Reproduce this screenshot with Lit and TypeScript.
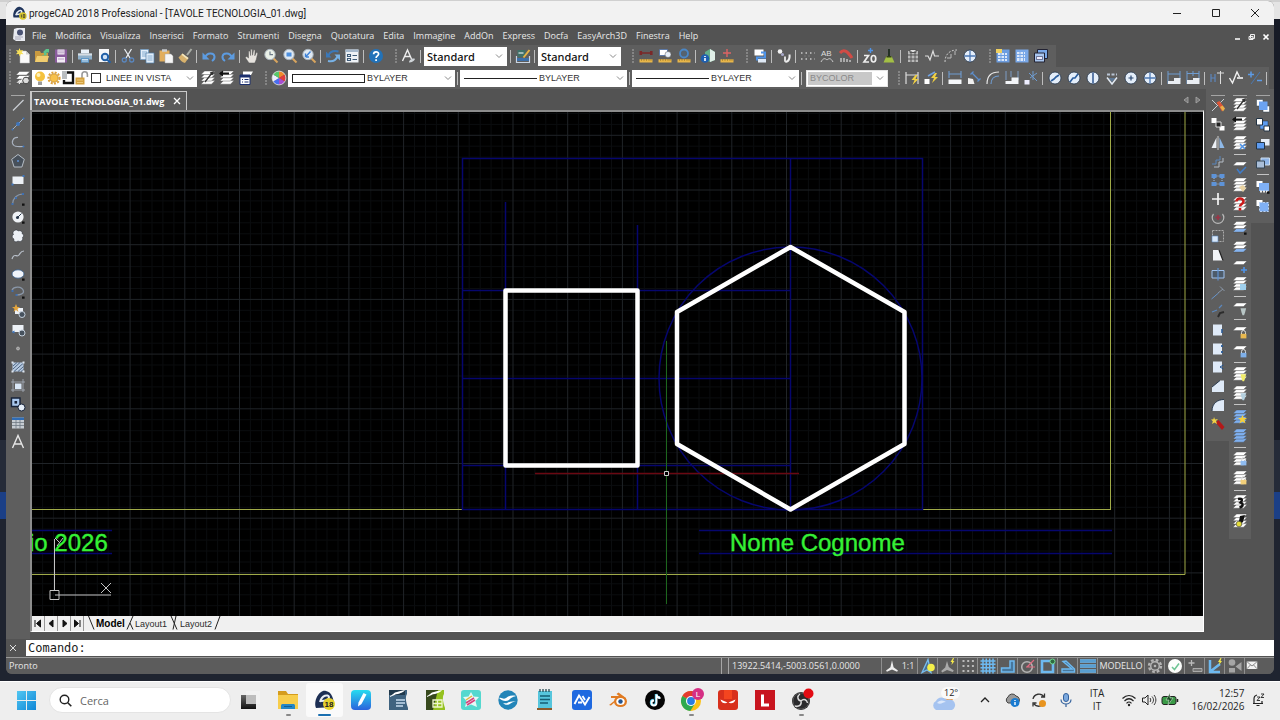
import { LitElement, html, svg, css } from "lit";
import { customElement } from "lit/decorators.js";

type Art = ReturnType<typeof svg>;

const sheet = (y: number, fill: string) =>
  svg`<path d="M4.5 ${y}h10.5l-3.5 3.6H1z" fill=${fill} stroke="#4a4a4a" stroke-width=".4"/>`;
const stack = (extra: Art | string = "", fill = "#fff") =>
  svg`${sheet(10.6, fill)}${sheet(7.4, fill)}${sheet(4.2, fill)}${sheet(1, fill)}${extra}`;
const single = (extra: Art) => svg`${sheet(3, "#fff")}${extra}`;
const bulb = (c: string) => svg`<path d="M8.5 8.2h5.6l-1 4-1 3h-1.6l-1-3z" fill=${c}/>`;
const lock = (c: string) =>
  svg`<path d="M9.5 10V8.5a2 2 0 0 1 4 0V10" fill="none" stroke="#ddd"/><path d="M8.6 9.8h5.8v4.6H8.6z" fill=${c}/>`;
const pad = (inner: Art) => svg`<path d="M3 2.5h9v11H3z" fill="#dfeaf8"/>${inner}`;
const disc = (inner: Art) =>
  svg`<circle cx="8" cy="8" r="6" fill="#e4eefa" stroke="#26374e" stroke-width=".8"/>${inner}`;
const ruler = svg`<path d="M1.5 11.3h13v3.3h-13z" fill="#e8b64a"/><path d="M3.5 11.3v1.4M6 11.3v1.4M8.5 11.3v1.4M11 11.3v1.4M13 11.3v1.4" stroke="#7b5a18" stroke-width=".6"/>`;
const lens = (inner: Art | string, dx = "#dfe9f3") =>
  svg`<path d="M10.5 10.5l4 4" stroke="#d9a55e" stroke-width="2"/><circle cx="7" cy="6.5" r="5.2" fill=${dx} stroke="#aab4bd"/>${inner}`;
const corner = svg`<path d="M12 12.5h2.6v2.2H12z" fill="#111"/>`;

const ART: Record<string, Art> = {
  new: svg`<path d="M5 3h6l3.5 3.5V15H5z" fill="#fafafa" stroke="#bbb" stroke-width=".5"/><path d="M11 3v3.5h3.5" fill="#cfcfcf"/><path d="M4.5 0l1 2.6 2.7-.6-1.5 2.3 1.9 1.9-2.8-.2-1 2.6-1-2.6-2.9.3 1.7-2L1 2l2.6.6z" fill="#f6e05a"/>`,
  open: svg`<path d="M1 3h5l1 2h7v9H1z" fill="#c99a3f"/><path d="M1 14l2-6h12l-2 6z" fill="#f0cd70"/><path d="M8 7h2V4.500H8.500L12 1h3v3.500h-2.500v3H8z" fill="#5cc48c"/>`,
  save: svg`<path d="M2 1.500h12v13H2z" fill="#8a5c9d"/><path d="M4.500 1.500h7v5h-7zM4 9h8v5.500H4z" fill="#f2ecf5"/><path d="M5 3h6M5 4.800h6M5 11h6" stroke="#a98bb8" stroke-width=".8"/>`,
  print: svg`<path d="M4 1.500h8v4H4z" fill="#e9f1f8"/><path d="M1 5.500h14v6H1z" fill="#8fb0ca"/><path d="M4 10h8v4.800H4z" fill="#5f99c9"/><path d="M5 11.500h6M5 13h6" stroke="#fff" stroke-width=".7"/><path d="M1 5.500h14v2H1z" fill="#d7dde2"/>`,
  preview: svg`<path d="M3 1h10v13H3z" fill="#f5f7fa"/><circle cx="9" cy="9" r="3.200" fill="#cfe1f5" stroke="#2261a8" stroke-width="2"/><path d="M11 11.500l3.500 3.300" stroke="#2261a8" stroke-width="2.200"/>`,
  cut: svg`<path d="M4.500 1l5.500 9M11.500 1L6 10" stroke="#e6ebf0" stroke-width="1.300"/><circle cx="4.300" cy="12" r="2" fill="none" stroke="#5a86bd" stroke-width="1.300"/><circle cx="11.700" cy="12" r="2" fill="none" stroke="#5a86bd" stroke-width="1.300"/>`,
  copy: svg`<path d="M1.500 1.500h8v10h-8z" fill="#e2eefa" stroke="#6f9cc5" stroke-width=".7"/><path d="M3 4h5M3 6h5M3 8h5" stroke="#6f9cc5" stroke-width=".8"/><path d="M7 5h8v10H7z" fill="#e2eefa" stroke="#4f7da8" stroke-width=".7"/><path d="M8.500 8h5M8.500 10h5M8.500 12h5" stroke="#6f9cc5" stroke-width=".8"/>`,
  paste: svg`<path d="M1.500 2.500h10v11h-10z" fill="#e2ae5c"/><path d="M4 1.200h5v2.500H4z" fill="#c9ccd0"/><path d="M7 6h6l2 2v7H7z" fill="#f6f6f6" stroke="#a9a9a9" stroke-width=".5"/>`,
  brush: svg`<path d="M14.500 1L10 7" stroke="#a9ada6" stroke-width="2"/><path d="M5.500 5.500l6 4.500L8 15c-3-.500-5-3-6.500-5.500z" fill="#d7b16c"/><path d="M5.500 5.500l6 4.500-1 1.500-6-4.800z" fill="#f1e5bd"/>`,
  undo: svg`<path d="M4 9.500C6 4 13 4.500 13.500 8.500c.2 2-1 3.500-2.500 4.500" fill="none" stroke="#5c9be0" stroke-width="2"/><path d="M1.500 4.500v7h7z" fill="#5c9be0"/>`,
  redo: svg`<path d="M12 9.500C10 4 3 4.500 2.500 8.500c-.2 2 1 3.500 2.500 4.500" fill="none" stroke="#5c9be0" stroke-width="2"/><path d="M14.500 4.500v7h-7z" fill="#5c9be0"/>`,
  hand: svg`<path d="M5 15L1.200 9.500l1.600-1L4.500 10V3l1.500.1.6 4.500V1.200h1.600l.3 6L9.600 1.800l1.500.3-.3 5.700 1.600-3.500 1.400.6-1.500 6.600-1.500 3.500z" fill="#e6e3de" stroke="#555" stroke-width=".5"/>`,
  zclock: lens(svg`<path d="M7 3.500v3.200h3" fill="none" stroke="#6c7a88" stroke-width="1.200"/>`, "#eaf1e8"),
  zwin: lens(svg`<path d="M4.500 4.500h5v4h-5z" fill="#4d90e0"/>`),
  zprev: lens(svg`<path d="M9.500 3.500L4.500 9M4.500 9V5.500M4.500 9H8" stroke="#3e82d8" stroke-width="1.400" fill="none"/>`),
  sync: svg`<path d="M3.500 7.500C5 3.500 9 2.500 13.500 3.500" fill="none" stroke="#3b78b8" stroke-width="2"/><path d="M1 3.500v6h5.500z" fill="#3b78b8"/><path d="M3 13c4.500 1 8-1 9.500-4.500" fill="none" stroke="#78b2e6" stroke-width="2"/><path d="M15 12.500v-6H9.500z" fill="#78b2e6"/>`,
  props: svg`<path d="M1.500 1.500h13v13h-13z" fill="#eef2f6"/><path d="M1.500 1.500h13v2.500h-13z" fill="#a5b8cc"/><path d="M3.500 6.500h3v2h-3zM3.500 10.500h3v2h-3zM8.500 7.500h4.500M8.500 11.500h4.500" stroke="#3d5a77" fill="none" stroke-width="1.100"/>`,
  help: svg`<circle cx="8" cy="8" r="7" fill="#2272b8"/><path d="M5.600 6.300c0-3.300 5-3.200 5-.3 0 2-2.500 1.900-2.500 4M8.100 11.300V13" fill="none" stroke="#fff" stroke-width="1.700"/>`,
  style: svg`<path d="M1.500 13L6.500 2l4 9M3.500 8.500H9" fill="none" stroke="#eee" stroke-width="1.400"/><path d="M8 14.500c0-3 4-5 6-3.500-1 2-3 3.500-6 3.500" fill="#cfd4d8"/>`,
  dimstyle: svg`<path d="M1.500 8v6.500h13V8" stroke="#c9d4e2" stroke-width="1.200" fill="none"/><path d="M2 11.500h12" stroke="#3c6fa8" stroke-width="3"/><path d="M2.500 2h8v7h-8z" fill="#3e7068"/><path d="M3.500 5h5" stroke="#fff"/><path d="M14.500 2L8.500 9.500" stroke="#e6b444" stroke-width="2"/>`,
  dist: svg`<path d="M2.500 5h11" stroke="#7b2828" stroke-width="1.600"/><path d="M1.500 3h2.600v4H1.500zM12 3h2.600v4H12z" fill="#7b2828"/>${ruler}`,
  area: svg`<path d="M2.500 1.500h8v6h-8z" fill="#fff" stroke="#3a62a0" stroke-width=".7"/><circle cx="11" cy="6.500" r="3" fill="#e6eef8" stroke="#555" stroke-width=".5"/>${ruler}`,
  volume: svg`<circle cx="8" cy="5.500" r="4" fill="#55626e" stroke="#4b87c6" stroke-width="1.800"/>${ruler}`,
  info: svg`<path d="M5 4l5-3 5 3v8l-5 2-5-2z" fill="#63ad8a"/><path d="M10 1v13l5-2V4z" fill="#e1efe8"/><circle cx="5" cy="10.500" r="4.300" fill="#1e5faf"/><path d="M5 8v1M5 10v3" stroke="#fff" stroke-width="1.600"/>`,
  point: svg`<path d="M8 1v8M4 5h8" stroke="#dd6464" stroke-width="1.400"/>${ruler}`,
  xref: svg`<path d="M2.500 1.500h9v6h-9z" fill="#fff"/><path d="M9 4.500h4v5H5v3" stroke="#4f93e6" stroke-width="2" fill="none"/><path d="M6 11h8v3.500H6z" fill="#dfe9f5"/>`,
  chain: svg`<circle cx="4" cy="3.500" r="2.300" fill="#f4f4f4"/><circle cx="6.500" cy="6.500" r="1.500" fill="#aac"/><path d="M8 12c3 2 5-1 4.500-5.500h2c.6 5-1.500 9-5.500 8z" fill="#eee"/><path d="M9 8.500v5" stroke="#ddd" stroke-width="2"/>`,
  dots: svg`<path d="M1 5h14M1 11h14" stroke="#c9c9c9" stroke-width="1.400" stroke-dasharray="1.500 3"/><path d="M4 8h8" stroke="#777" stroke-dasharray="2 2"/>`,
  ab: svg`<text x="2" y="8" font-family="Liberation Sans" font-size="8" fill="#ddd">AB</text><path d="M2 14c2-4 4-4 6-2 2-2 4-2 6 2" stroke="#ccc" fill="none"/>`,
  rail: svg`<path d="M2 5c4-5 8-1 12 5" stroke="#d14b45" fill="none" stroke-width="3"/><path d="M3 10v4M6 10v4M9 11v3M12 12v2" stroke="#ddd" stroke-width="1.200"/>`,
  z0: svg`<path d="M2 7.500h4.500L2 14h5M11.500 7.500c3 0 3 6.500 0 6.500s-3-6.500 0-6.500" fill="none" stroke="#eee" stroke-width="1.700"/><path d="M8.500 0v5M6 2.500h5" stroke="#4f93e6" stroke-width="1.400"/>`,
  broom: svg`<path d="M8 1v7" stroke="#1f2d20" stroke-width="1.800"/><path d="M5.500 8h5l3 6.500h-11z" fill="#a3bf45"/><path d="M5.500 8h5v1.500h-5z" fill="#33401c"/>`,
  block: svg`<path d="M3 3h10v11H3z" fill="#b9b9b9"/><path d="M5 1.500h6v3H5zM2 7h12M2 11h12M6 3v11M10 3v11" stroke="#555" fill="#ddd"/>`,
  wave: svg`<path d="M1 8h3l2 4 3-9 1.500 5H15" stroke="#ddd" fill="none" stroke-width="1.200"/>`,
  curve: svg`<path d="M2 14C2 7 6 2 14 2" stroke="#ccc" fill="none" stroke-dasharray="2 1.500"/><path d="M4 10h4M8 6v4M12 3v4" stroke="#bbb"/>`,
  cross: disc(svg`<path d="M8 2.500v11M2.500 8h11" stroke="#4c79b5" stroke-width="1.300"/>`),
  table1: svg`<path d="M1.500 1.500h13v13h-13z" fill="#6d9de0"/><path d="M3 5h9v8H3z" fill="#dce8fa"/><path d="M3 7.500h11M3 10.500h11M6 5v9M9.500 5v9" stroke="#6d9de0"/><path d="M1 1h6v4H1z" fill="#f0d060"/>`,
  table2: svg`<path d="M1.500 1.500h13v13h-13z" fill="#7aa8e8"/><path d="M3 4h8v9H3z" fill="#dce8fa"/><path d="M3 6.500h11M3 9.500h11M6 4v9M9.500 4v9" stroke="#7aa8e8"/>`,
  windows: svg`<path d="M4.500 1.500h10v9h-10z" fill="#7aa8e8" stroke="#223"/><path d="M1.500 5h10v9h-10z" fill="#a9c7f0" stroke="#223"/><path d="M3.500 8.500h6v3h-6z" fill="#eef" stroke="#335" stroke-width=".6"/>`,
  layers: svg`${sheet(9.5, "#ddd")}${sheet(5.5, "#fff")}${sheet(1.5, "#fff")}<circle cx="11" cy="10.500" r="3.300" fill="#ddd" stroke="#444"/><path d="M8 8l-4 6" stroke="#fff"/>`,
  layPrev: stack(svg`<path d="M5 12l7-9M10 3l3-1-1 3" stroke="#333" fill="none" stroke-width="1.300"/>`),
  layBack: stack(svg`<path d="M1 3.500h9" stroke="#111" stroke-width="2.200"/><path d="M4 .5v6l-4-3z" fill="#111"/>`),
  layState: svg`<path d="M5 1.500h10l-2 3.500H5z" fill="#fff"/><path d="M2 5h10v9.500H2z" fill="#fff" stroke="#1b2f6e"/><path d="M2 5h10v2.500H2z" fill="#1b2f6e"/><path d="M4 9.500h1M6.500 9.500h4M4 12h1M6.500 12h4" stroke="#1b2f6e"/>`,
  wheel: svg`<path d="M8 8V1.300A6.700 6.700 0 0 1 13.800 4.600z" fill="#f08a2c"/><path d="M8 8l5.800-3.400a6.700 6.700 0 0 1 0 6.800z" fill="#e33c3c"/><path d="M8 8l5.800 3.400A6.700 6.700 0 0 1 8 14.700z" fill="#a74fd0"/><path d="M8 8v6.700a6.700 6.700 0 0 1-5.800-3.300z" fill="#4a6ef0"/><path d="M8 8l-5.800 3.400a6.700 6.700 0 0 1 0-6.800z" fill="#eef"/><path d="M8 8L2.200 4.600A6.700 6.700 0 0 1 8 1.300z" fill="#58c86a"/><circle cx="8" cy="8" r="6.900" fill="none" stroke="#e8e8e8" stroke-width=".8"/>`,
  bulb: svg`<circle cx="8" cy="6.500" r="5" fill="#f5c23e"/><circle cx="6.500" cy="5" r="2" fill="#fdf0b8"/><path d="M6 11.500h4V15H6z" fill="#9b9b9b"/>`,
  sun: svg`<circle cx="8" cy="8" r="5.600" fill="none" stroke="#e0a23a" stroke-width="2" stroke-dasharray="2 1.300"/><circle cx="8" cy="8" r="4.200" fill="#f7c04a" stroke="#b7822c" stroke-width=".7"/>`,
  frame: svg`<path d="M7 2.500h6v10.500H4V10" fill="#fff" stroke="#111" stroke-width="2.400"/><path d="M2 1h5v8H2z" fill="#b9bdc0"/>`,
  unlock: svg`<path d="M8 8V4.500a2.700 2.700 0 0 1 5.400 0V7" fill="none" stroke="#999" stroke-width="1.600"/><path d="M1.500 7.500h9v7h-9z" fill="#d5a240"/><path d="M3 10h6M3 12.500h6" stroke="#f2d48a" stroke-width=".8"/>`,
  dimFlash: svg`<path d="M2 2v12M14 2v12M2 5h12" stroke="#ddd" stroke-width="1.200"/><path d="M11.500 5l-4 5h3l-2 5 6-6h-3l2-4z" fill="#f0d043"/>`,
  dimFlash2: svg`<path d="M1.500 9h5v5h-5z" fill="#fff"/><path d="M5 6l7-4" stroke="#6fa0e0" stroke-width="1.500"/><path d="M12 3l-4 5h3l-2 5 6-6h-3l2-4z" fill="#f0d043"/>`,
  dimLin: svg`<path d="M2 1v7M14 1v7M2 4h12" stroke="#6f9cd0" stroke-width="1.100"/><path d="M1.500 9.500h13v4.500h-13z" fill="#f5f7fa"/>`,
  dimAl: svg`<path d="M2 8l5 1 1.500 5H2z" fill="#f0f0f0"/><path d="M6 3l7 7M4.500 4.500l3-3M11.500 11.500l3-3" stroke="#5d8fcd" stroke-width="1.300"/>`,
  dimArc: svg`<path d="M2 14C2 6 6 2 14 2" stroke="#e6e6e6" fill="none" stroke-width="1.200"/><path d="M6 14c0-5 3-8 8-8" stroke="#6f9cd0" fill="none" stroke-width="1.200"/>`,
  dimOrd: svg`<path d="M2 1v9M7 1v6M14 1v9" stroke="#7c9cc4"/><path d="M1.500 11h6V7.500h7V14h-13z" fill="#f3f5f8"/>`,
  dimJog: svg`<path d="M1.500 10h5v4.500h-5z" fill="#eef"/><path d="M6 3l8 8M14 3L7 8M10 1v9" stroke="#6f9cd0"/>`,
  rad1: disc(svg`<path d="M4 11l3-2 2-2 3-2" stroke="#2d5f9e" fill="none" stroke-width="1.700"/>`),
  rad2: disc(svg`<path d="M4 12l3-4h2l3-4" stroke="#2d5f9e" fill="none" stroke-width="1.700"/>`),
  rad3: disc(svg`<path d="M8 2.500v11" stroke="#4d6ea0" stroke-width="1.800"/>`),
  angle: svg`<path d="M3 4.500h10" stroke="#b8c4d4" stroke-width="2" stroke-dasharray="3 1.500"/><path d="M4.500 8h7L8 12z" fill="#5d7896"/><path d="M3 7.500l5 6.500 5-6.500" stroke="#e2e9f2" fill="none" stroke-width="1.500"/>`,
  cen: disc(svg`<path d="M8 5.500v5M5.500 8h5" stroke="#25446e" stroke-width="1.200"/>`),
  base: svg`<path d="M2 1v13M14 1v8M2 4h12" stroke="#6f9cd0"/><path d="M2 11h6V8h6.500v6H2z" fill="#e9edf2"/>`,
  base2: svg`<path d="M2 1v13M8 1v5M14 1v8M2 3.500h12" stroke="#6f9cd0"/><path d="M2 10h6V8h6.500v6H2z" fill="#e9edf2"/>`,
  tol: svg`<path d="M2 4v8M6 4v8M2 8h4" stroke="#5d86bd" stroke-width="1.200"/><path d="M8 3h7M11.500 1v13" stroke="#ddd"/>`,
  check: svg`<path d="M1.500 8l3 5L9 2l2.500 5" fill="none" stroke="#f0f0f0" stroke-width="1.400"/><path d="M9 8h6" stroke="#fff" stroke-width="1.500"/>`,
  plusminus: svg`<path d="M4 1.500v6M1 4.500h6M10 10.500h5" stroke="#5d9be6" stroke-width="1.500"/><path d="M13 2L4 14" stroke="#4b79b0"/>`,
  line: svg`<path d="M3 13.500L13.500 3" stroke="#c9cdd2" stroke-width="1.200"/>`,
  xline: svg`<path d="M2 14L14 2" stroke="#9fb0c4"/><circle cx="8" cy="8" r="2" fill="#3f76bd"/><circle cx="2.500" cy="13.500" r="1" fill="#3f76bd"/><circle cx="13.500" cy="2.500" r="1" fill="#3f76bd"/>`,
  pline: svg`<path d="M8 2.500C3 2 1 7 3.500 10c1.500 2 4 2 10 1.500" fill="none" stroke="#a9b2bf" stroke-width="1.200"/><circle cx="13.500" cy="11.500" r="1" fill="#3f76bd"/>`,
  polygon: svg`<path d="M8 1.500l6.300 4.800-2.400 7.700H4.100L1.700 6.300z" fill="#47505a" stroke="#b5bdc6"/><circle cx="8" cy="8" r="1" fill="#5c90d8"/>`,
  rect: svg`<path d="M2.500 4.500h11V12h-11z" fill="#edf1f6"/><path d="M12.500 3h2v2h-2zM1.500 11.500h2v2h-2z" fill="#3f76bd"/>`,
  arc: svg`<path d="M2.500 13C3 7 7 3 13 3" fill="none" stroke="#8593a5" stroke-width="1.200"/><path d="M1.500 12h2v2h-2zM5 6h2v2H5zM12 2h2v2h-2z" fill="#3f6fb0"/>${corner}`,
  circle: svg`<circle cx="8" cy="8" r="5.600" fill="#f0f3f6"/><circle cx="7.500" cy="8.500" r="1.500" fill="#27364a"/><path d="M8 8l3.500-3.500" stroke="#27364a"/>${corner}`,
  cloud: svg`<path d="M4 3c2-2 4-.5 4 0 2-1 5 .5 4 2.500 2 .5 2 3 .5 4 1 3-2 5-4.500 3.500C5.500 15 3 13 4 11 1.500 10 2 7 3.500 6.500 2.500 5 3 3.500 4 3z" fill="#edf1f6" stroke="#33383f" stroke-width=".6"/>`,
  spline: svg`<path d="M2 12c2-7 5-1 7-4s2-4 5-4" fill="none" stroke="#b7bec8" stroke-width="1.200"/>`,
  ellipse: svg`<ellipse cx="8" cy="8" rx="6" ry="4.200" fill="#f0f4fa" stroke="#315988" stroke-width=".8"/>${corner}`,
  earc: svg`<path d="M2 6c2-4 10-4 11.500 1 .5 3-4 4-7 4" fill="none" stroke="#8a97a8" stroke-width="1.200"/><path d="M1.500 6h2v2h-2zM5.500 10h2v2h-2z" fill="#3f6fb0"/>${corner}`,
  insblk: svg`<path d="M5 5h8v6H5z" fill="#edf1f6"/><path d="M6 1l1.300 3H10L7.500 6l1 3L6 7 3.500 9l1-3L2 4h2.700z" fill="#e3a43c"/><circle cx="12" cy="11.500" r="3" fill="#47525e" stroke="#c4cfdb"/>`,
  mkblk: svg`<path d="M2.500 3h11v7h-11z" fill="#edf1f6"/><path d="M1.500 10l3-1.500v3z" fill="#3f76bd"/><circle cx="12" cy="11" r="3" fill="#47525e" stroke="#c4cfdb"/>`,
  dot: svg`<circle cx="8" cy="8.500" r="1.500" fill="#999" stroke="#ccc" stroke-width=".6"/>`,
  hatch: svg`<path d="M2.500 3.500h11v9h-11z" fill="#b8cbe2"/><path d="M3 7l4-3.500M3 10l7-6.500M4 12.500l9-8M8 12.500l5.500-5M11 12.500l2.500-2" stroke="#4e6683"/><path d="M1.500 2.500h2v2h-2zM12.500 2.500h2v2h-2zM1.500 11.500h2v2h-2zM12.500 11.500h2v2h-2z" fill="#dde6f0"/>`,
  region: svg`<path d="M3 1v13M13 1v13M1 4h14M1 12h14" stroke="#a9b3bf" stroke-width=".8"/><path d="M5 5.500h6.500V11H5z" fill="#d9e7f7"/>`,
  group: svg`<path d="M1.500 2H10v8.500H1.500z" fill="#a9c8ee" stroke="#17233a" stroke-width="1.400"/><path d="M4.500 5h2.600v2.600H4.500z" fill="#17233a"/><circle cx="11.500" cy="11.500" r="3.500" fill="#e5edf7" stroke="#17233a"/>`,
  grid: svg`<path d="M2 2.500h12v11H2z" fill="#c6ccd2"/><path d="M2 2.500h12V5H2z" fill="#2f6cb5"/><path d="M2 7.500h12M2 10.500h12M6 5v8.500M10 5v8.500" stroke="#707a84" stroke-width=".8"/>`,
  text: svg`<path d="M2.500 14L8 1.500 13.500 14M4.600 10h6.800" fill="none" stroke="#e6e6e6" stroke-width="1.400"/>`,
  erase: svg`<path d="M2 14L14 2M2 3l5 5" stroke="#c9ced4"/><path d="M6.500 5.500l3-1.500 5 7L12 14.500z" fill="#dd5538"/><path d="M10 10l3 4.500 2-3-2.500-3z" fill="#e8b04a"/>`,
  cpobj: svg`<path d="M1.500 2h5v5h-5zM9.500 10h5v4.500h-5z" fill="#fff"/><path d="M6 6h5v5H6z" fill="#222" stroke="#ddd"/>`,
  mirror: svg`<path d="M6.500 2.500V13h-5z" fill="#edf1f6"/><path d="M9.500 2.500V13h5z" fill="#8fb9e8"/><path d="M8 1v14" stroke="#eee" stroke-width=".8"/>`,
  offset: svg`<path d="M4 13h5V8h4V4" fill="none" stroke="#b5bdc6"/><path d="M2 10h4V6h4V2" fill="none" stroke="#5887be"/>`,
  array: svg`<path d="M1.500 2h5v4h-5zM9.500 2h5v4h-5zM1.500 10h5v4h-5zM9.500 10h5v4h-5z" fill="#5d93d8"/><path d="M6.500 4h3M6.500 12h3M4 6v4M12 6v4" stroke="#9fc2ee" stroke-dasharray="1 1"/>`,
  move: svg`<path d="M8 2v12M2 8h12" stroke="#f4f4f4" stroke-width="1.700"/>`,
  rotate: svg`<path d="M3.500 4A5.800 5.800 0 1 0 12.500 4" fill="none" stroke="#b9b9b9" stroke-width="1.200"/><path d="M8 5v5M5.500 7.500h5" stroke="#9c3346" stroke-width="1.600"/>`,
  scale: svg`<path d="M2.500 2.500h11v11h-11z" fill="none" stroke="#aaa" stroke-dasharray="2 1"/><path d="M2 8h6v6H2z" fill="#d9e8fa" stroke="#5b88be" stroke-width=".6"/>`,
  stretch: svg`<path d="M3 3h6l4 10.500H3z" fill="#f2f4f7"/><path d="M9 3l4 10.500" stroke="#222" stroke-width="1.200"/>`,
  trim: svg`<path d="M2 4.500h12V12H2z" fill="#4d5b6a" stroke="#9fc2ee"/><path d="M8 2v12.500" stroke="#5f92d2" stroke-width="1.200"/>`,
  extend: svg`<path d="M1.500 14l7-6" stroke="#6795cc"/><path d="M8 8l5-4M10 1.500L14.500 6" stroke="#8a97a8"/>`,
  brk: svg`<path d="M8 14l2-4 4-1" stroke="#2c2c2c" stroke-width="2" fill="none"/><path d="M2 9l5-2M9 5l3-3" stroke="#5b88be" stroke-width="1.200"/>`,
  pad1: pad(svg`<path d="M12 7v4" stroke="#2b5b96" stroke-width="1.600"/>`),
  pad2: pad(svg`<path d="M12 4v2M12 10v2" stroke="#2b5b96" stroke-width="1.800"/>`),
  pad3: pad(svg`<path d="M13.500 6L10 8l3.500 2" stroke="#1e4f8c" fill="none"/>`),
  chamfer: svg`<path d="M2 14V9l8-6.500h4V14z" fill="#dfeaf8"/><path d="M2 9l8-6.500" stroke="#2b3b50"/>`,
  fillet: svg`<path d="M2 14C2 6 8 2.500 14 2.500V14z" fill="#dfeaf8"/><path d="M2 14C2 6 8 2.500 14 2.500" fill="none" stroke="#2b3b50"/>`,
  explode: svg`<path d="M5.500 6.500l3-2.500 6 7-2.500 3z" fill="#b31919"/><path d="M4 1l1 2.500L8 3 6 5l1 3-2.500-1.500L2 8l.8-2.800L1 3.500l2.400-.2z" fill="#f0d245"/>`,
  stCheck: single(svg`<path d="M5 10l3 4 6-6" fill="none" stroke="#3f7cc9" stroke-width="1.500"/>`),
  stBrush: stack(svg`<path d="M7 10l4-2 3 3-3 4z" fill="#e8d2a2"/>`),
  stQ: stack(svg`<path d="M4.500 5.500c0-4 7-4 7 0 0 2.500-3.500 2.500-3.500 5M8 12v2.500" fill="none" stroke="#cc1a1a" stroke-width="2.600"/>`),
  stFlake: stack(svg`<path d="M8 9l5 5M13 9l-5 5" stroke="#4f93e6" stroke-width="1.500"/>`),
  st1: svg`${sheet(8.5, "#86b4f0")}${sheet(5, "#fff")}${sheet(1.5, "#fff")}${corner}`,
  st2: svg`${sheet(9.5, "#86b4f0")}${sheet(6, "#fff")}${sheet(2.4, "#fff")}`,
  stPlus: single(svg`<path d="M12 9v6M9 12h6" stroke="#4f93e6" stroke-width="1.600"/>`),
  stIce: stack(svg`<path d="M8 8h6v6H8z" fill="#9fd0ee"/>`),
  stBulbOff: single(bulb("#b8c6c6")),
  stLock: single(lock("#e8b850")),
  stLockB: single(lock("#7fb0ea")),
  stBulb: stack(bulb("#f2ec6a")),
  stBulb2: stack(bulb("#b5d1e0")),
  stStar: stack(svg`<path d="M10.500 6l1.300 3H15l-2.500 2 1 3.500-3-2-3 2 1-3.500L6 9h3.200z" fill="#f5cf3a"/>`, "#7fb0f0"),
  stBlue: stack("", "#7fb0f0"),
  stLk: stack(lock("#f2cf7a")),
  stLkB: stack(lock("#8fbcf2")),
  stMoon: stack(svg`<path d="M6 5c4-1 5 1 2.500 3.500 3 1 3 4-1 5" stroke="#111" fill="none" stroke-width="2.400"/>`),
  stBee: stack(svg`<path d="M8 3l5-1-2 7-5 4z" fill="#111"/><circle cx="7" cy="11" r="2.800" fill="#e3dc3a" stroke="#333" stroke-width=".6"/>`),
  ord1: svg`<path d="M1.500 1.500H8V8H1.500zM8 8h6.500v6H8z" fill="#fff" stroke="#345" stroke-width=".5"/><path d="M4 3.500h8.500V12H4z" fill="#6ba3f2"/>`,
  ord2: svg`<path d="M5 4h8v8H5z" fill="#5b9bf0" stroke="#234" stroke-width=".5"/><path d="M1.500 1.500h6V8h-6zM9 9h5.500v5H9z" fill="#fff" stroke="#234"/>`,
  ord3: svg`<path d="M6 3h8.500v6.500H6z" fill="#e6edf5"/><path d="M1.500 6.500h8V13h-8z" fill="#5d9bf0" stroke="#234"/>`,
  ord4: svg`<path d="M6 3h8.500v7H6z" fill="#8fb5e8" stroke="#cde"/><path d="M1.500 6h8v7h-8z" fill="#a9bed8" stroke="#345"/>`,
  ord5: svg`<path d="M1.500 2h6v6h-6z" fill="#fff"/><path d="M4 4h10v8H4z" fill="#7fb0f5"/><path d="M5 12.500h9" stroke="#eee" stroke-dasharray="2 1" stroke-width="2"/>${corner}`,
  ord6: svg`<path d="M1.500 2h6v6h-6z" fill="#fff"/><path d="M4.500 4.500h9v9h-9z" fill="#7fb0f5" stroke="#b9d2f5" stroke-dasharray="2 1.500"/>`,
  sAnno: svg`<path d="M8 1.500l1.800 8 5 3.500-1 1.500L8 12l-5.800 2.500-1-1.500 5-3.500z" fill="#eee"/>`,
  sAnno2: svg`<path d="M8 1.500L2 14.500l5-2.500 4 2.500z" fill="#4b6f92" stroke="#76bdf0" stroke-width="1.300"/><circle cx="11" cy="9.500" r="3.800" fill="#f4f04a"/>`,
  sAnno3: svg`<path d="M7 3l1.800 6 5 3.500-1 1.500L7 12l-4.800 2.500-1-1.500 4-3.500z" fill="#aaa"/><path d="M13 0l-2.500 4H12l-.5 3 3-4H13l1-3z" fill="#f4e84a"/>`,
  sDots: svg`<path d="M2.500 3H14M2.500 8H14M2.500 13H14" stroke="#bbb" stroke-width="2" stroke-dasharray="2 2.700"/>`,
  sGrid: svg`<path d="M3 .5v15M6.300 .5v15M9.700 .5v15M13 .5v15M.5 3h15M.5 6.300h15M.5 9.700h15M.5 13h15" stroke="#6db9f0" stroke-width="1.500"/>`,
  sOrtho: svg`<path d="M1.500 14H14V3h-4v7H1.500z" fill="#48779c" stroke="#6db9f0" stroke-width="1.500"/>`,
  sPolar: svg`<circle cx="7" cy="9" r="5.300" fill="none" stroke="#b5b5b5" stroke-width="1.600"/><path d="M7 9l7-7M6 9h9" stroke="#e26a80" stroke-width="1.200"/>`,
  sSnap: svg`<path d="M2 3h11v11H2z" fill="none" stroke="#6db9f0" stroke-width="2.600"/><circle cx="12.500" cy="3.500" r="2.500" fill="#2f6b42" stroke="#74d890"/>`,
  sTrack: svg`<path d="M3 3.500l9 7.500H2v3h12.500v-3L6 3z" fill="#48779c" stroke="#6db9f0" stroke-width="1.400"/>`,
  sLwt: svg`<path d="M0 3h16M0 8h16M0 13h16" stroke="#6db9f0" stroke-width="3.400"/><path d="M0 3h16M0 8h16M0 13h16" stroke="#4786b4" stroke-width="1.200"/>`,
  sGear: svg`<circle cx="8" cy="8" r="6" fill="none" stroke="#b5b5b5" stroke-width="2.400" stroke-dasharray="2.700 2"/><circle cx="8" cy="8" r="4.300" fill="none" stroke="#b5b5b5" stroke-width="1.500"/><circle cx="8" cy="8" r="1.300" fill="#b5b5b5"/>`,
  sOk: svg`<circle cx="8" cy="8" r="7" fill="#fbfdfb"/><path d="M5 9l2.500 2.500L12 5.500" fill="none" stroke="#6cc492" stroke-width="1.500"/>`,
  sPm: svg`<path d="M4.500 2v6M1.500 5h6" stroke="#bbb" stroke-width="1.300"/><path d="M6 10.500h9v3H6z" fill="#777" stroke="#bbb" stroke-width=".8"/>`,
  sUcs: svg`<path d="M3 2v12h10M4 13l9-7" fill="none" stroke="#6db9f0" stroke-width="2.500"/><path d="M13.500 0L11 4h1.500l-.5 3 3-4h-1.500l1-3z" fill="#f4e84a"/>`,
  sShapes: svg`<circle cx="5" cy="4.500" r="3.300" fill="#a5a5a5"/><path d="M2 10h6v4.500H2zM14.500 4v9L8.500 8.500z" fill="#a5a5a5"/>`,
  sMail: svg`<path d="M1 2h14v10H1z" fill="#f2f2f2"/><path d="M1.500 2.500L8 8l6.500-5.500M1.500 11.500l4.500-5M14.500 11.500l-4.500-5" stroke="#555" fill="none" stroke-width=".9"/>`,
};

const pic = (name: string, size = 16) =>
  html`<svg class="pic" width=${size} height=${size} viewBox="0 0 16 16" aria-hidden="true">${ART[name]}</svg>`;

/** Toolbar shorthand: "|" is a separator, any other word names an icon button. */
const tools = (list: string) =>
  list.split(" ").map((t) =>
    t === "|" ? html`<i class="sep"></i>` : html`<button class="tool" type="button" aria-label=${t}>${pic(t)}</button>`,
  );

const chevron = html`<svg class="chev" width="8" height="8" viewBox="0 0 8 8" aria-hidden="true"><path d="M1 2.500l3 3 3-3" fill="none" stroke="#8a8a8a"/></svg>`;

const MENUS = "File,Modifica,Visualizza,Inserisci,Formato,Strumenti,Disegna,Quotatura,Edita,Immagine,AddOn,Express,Docfa,EasyArch3D,Finestra,Help".split(",");

@customElement("cad-drawing")
class CadDrawing extends LitElement {
  static styles = css`
    :host { display: block; background: #000; overflow: hidden; }
    svg { display: block; width: 100%; height: 100%; }
    .label { font: 24px "Liberation Sans", Arial, sans-serif; fill: #35f135; stroke: #35f135; stroke-width: 0.4; }
    .guide { fill: none; stroke: #06066e; stroke-width: 1.5; }
    .sheet { fill: none; stroke: #a0aa48; stroke-width: 1; }
    .solid { fill: none; stroke: #fff; stroke-width: 4.5; stroke-linejoin: round; }
    .ucs { fill: none; stroke: #c4c4c4; stroke-width: 1; }
  `;
  render() {
    const step = 54.7 / 5;
    const minor: Art[] = [];
    const major: Art[] = [];
    for (let i = 0; i < 240; i++) {
      const x = 20.7 + i * step;
      const y = 80.6 + i * step;
      const into = i % 5 === 0 ? major : minor;
      into.push(svg`<path d="M${x.toFixed(1)} 0V2000M0 ${y.toFixed(1)}H3000"/>`);
    }
    return html`<svg role="img" aria-label="Disegno">
      <g transform="translate(-32 -112)">
        <g stroke="#0b0d0f">${minor}</g>
        <g stroke="#202428">${major}</g>
        <path class="sheet" d="M1110.500 100V510M32 509.500H462M922 509.500H1110.500M1185 100V574.500H32" />
        <path class="guide" d="M462.500 158.500H922.500V509.500H462.500zM790.500 158V509M505.500 202V509M637.500 225V509M462 290.500H790M462 378.500H790M462 465.500H790M699 530.500H1112M699 553.500H1112M32 530.500H112M32 553.500H112" />
        <circle class="guide" cx="790.500" cy="378.500" r="131.500" />
        <path d="M535 473.500H799" stroke="#6a0812" stroke-width="1.500" />
        <path d="M666.500 341V604" stroke="#1d661d" />
        <path class="solid" d="M505.500 290.500H637.500V465.500H505.500zM790.500 247L904.500 312V444L790.500 509.500 677 444V312z" />
        <path d="M664.500 471.500h4v4h-4z" fill="#000" stroke="#ccc" />
        <text class="label" x="730" y="551">Nome Cognome</text>
        <text class="label" x="29" y="551">io 2026</text>
        <path class="ucs" d="M50 590.500h9v9h-9zM54.500 590V539M55 595H111M101 583l10 10M111 583l-10 10M55 538l5 5M63 538l-6 8" />
      </g>
    </svg>`;
  }
}

@customElement("app-root")
class AppRoot extends LitElement {
  static styles = css`
    :host { display: flex; flex-direction: column; height: 100vh; box-sizing: border-box; overflow: hidden;
      font: 9px "Open Sans", "Noto Sans", sans-serif; color: #e8e8e8;
      background: linear-gradient(#d0d0d0 0 2px, #e4e4e4 2px 19px, #171b26 19px 440px, #252b38 440px 492px, #1b3f86 492px 519px, #1f2430 519px); }
    * { box-sizing: border-box; }
    button { margin: 0; padding: 0; border: 0; background: none; color: inherit; font: inherit; display: flex; align-items: center; justify-content: center; }
    svg { display: block; flex: none; }
    select, input { font: inherit; color: inherit; border: 0; background: none; margin: 0; padding: 0; outline: 0; min-width: 0; appearance: none; }
    .window { flex: 1; min-height: 0; margin: 1px 6px 7px; display: flex; flex-direction: column; background: #535353; border-radius: 6px; overflow: hidden; }
    .title { height: 24px; display: flex; align-items: center; background: #f2f2f2; color: #1c1c1c; padding-left: 6px; font: 10px Roboto, "Open Sans", sans-serif; }
    .title h1 { font: inherit; margin: 0 0 0 2px; flex: 1; white-space: nowrap; }
    .title .win { width: 39px; height: 24px; }
    .menu { height: 20px; display: flex; align-items: center; padding: 0 1px 0 5px; }
    .menu nav { display: flex; gap: 9px; flex: 1; padding-left: 5px; }
    .menu .mdi { width: 14px; height: 16px; align-self: flex-end; }
    .bar { display: flex; align-items: center; width: max-content; height: 22px; background: #5e5e5e; padding-right: 6px; }
    .bar.low { padding-right: 0; }
    .tool { width: 19px; height: 19px; flex: none; }
    .sep { flex: none; width: 5px; height: 13px; background: linear-gradient(#bdbdbd, #bdbdbd) center / 1px 100% no-repeat; }
    .grip { flex: none; width: 7px; height: 14px; background: repeating-linear-gradient(#858585 0 2px, #5e5e5e 2px 3px) center / 2px 100% no-repeat; }
    .gap { margin-left: 7px; }
    .combo { display: flex; align-items: center; background: #fff; color: #333; height: 17px; padding: 0 2px; font: 9px "Liberation Sans", Arial, sans-serif; }
    .combo select { flex: 1; height: 100%; }
    .combo.std { width: 83px; height: 19px; margin: 0 1px; padding: 0 3px; color: #111; font: 500 11px "Noto Sans", sans-serif; }
    .combo.layer { width: 165px; margin-right: 1px; padding-left: 0; }
    .combo.layer .pic { margin-right: -2px; }
    .combo.layer .swatch { width: 10px; height: 10px; border: 1px solid #333; margin: 0 5px 0 3px; flex: none; }
    .combo.by { width: 167px; gap: 2px; }
    .by .swatch { width: 73px; height: 9px; border: 1px solid #222; margin-left: 2px; }
    .by .rule { width: 73px; height: 1px; background: #222; margin-left: 2px; }
    .combo.off { width: 82px; color: #8a8a8a; margin-left: 2px; border: 1px solid #e6e6e6; padding-left: 1px; }
    .combo.off select { background: #c8c8c8; padding-left: 2px; height: 13px; opacity: 1; margin-right: 4px; }
    .chev { margin-right: 1px; pointer-events: none; }
    .body { flex: 1; min-height: 0; display: flex; align-items: stretch; }
    .rail { flex: none; display: flex; flex-direction: column; align-items: center; background: #5e5e5e; align-self: flex-start; padding-top: 6px; }
    .rail::before { content: ""; width: 14px; height: 1px; background: #a5a5a5; flex: none; }
    .rail .tool { flex: 1 1 0; height: auto; min-height: 0; }
    .rail .sep { width: 12px; height: 5px; background: linear-gradient(#c4c4c4, #c4c4c4) center / 100% 1px no-repeat; }
    .rail .stack { display: flex; flex-direction: column; align-items: center; }
    .rail.draw { width: 24px; height: 100%; }
    .draw .stack { height: 355px; }
    .edit { width: 23px; padding-bottom: 8px; margin-left: 2px; }
    .edit .stack { height: 337px; }
    .lay { width: 22px; padding-bottom: 9px; }
    .lay .stack { height: 434px; }
    .order { width: 23px; padding-bottom: 8px; }
    .order .stack { height: 119px; }
    .center { flex: 1; min-width: 0; display: flex; flex-direction: column; padding-bottom: 7px; }
    .files { height: 21px; display: flex; align-items: flex-end; padding-right: 2px; }
    .file { height: 19px; border: 1px solid #c9c9c9; border-width: 1px 1px 0 2px; padding: 0 5px 0 2px; display: flex; align-items: center; gap: 9px; color: #fff; font-weight: 700; background: #5a5a5a; }
    .files .arrows { margin-left: auto; display: flex; gap: 4px; align-self: center; }
    .doc { flex: 1; min-height: 0; display: flex; flex-direction: column; border: 2px solid #8c8c8c; border-right: 1px solid #fff; border-bottom: 1px solid #fff; }
    cad-drawing { flex: 1; min-height: 0; }
    .sheets { height: 15px; display: flex; background: #f0f0f0; color: #2c2c2c; font: 9px "Liberation Sans", Arial, sans-serif; }
    .sheets .go { width: 13px; border-right: 1px solid #999; }
    .sheets .on { font-weight: 700; font-size: 10px; color: #000; }
    .sheets .first { margin-left: 4px; }
    .command { height: 19px; display: flex; align-items: center; border-bottom: 1px solid #9a9a9a; }
    .command button { width: 14px; height: 14px; }
    .command label { margin-left: 6px; flex: 1; height: 16px; background: #fff; color: #1a1a1a; display: flex; align-items: center; gap: 6px; padding: 0 2px; font: 12px/16px "DejaVu Sans Mono", monospace; }
    .command input { flex: 1; }
    .status { height: 16px; display: flex; align-items: stretch; background: #5c5c5c; line-height: 16px; padding-right: 15px; }
    .status .msg { flex: 1; padding-left: 3px; }
    .status .cell { width: 20px; border-left: 1px solid #8f8f8f; }
    .status .cell:last-child { width: 15px; }
    .status .thin { width: 7px; border-left: 1px solid #a5a5a5; }
    .status .pos { width: 153px; border-left: 1px solid #a5a5a5; padding-left: 3px; white-space: nowrap; }
    .status .scale { width: 36px; border-left: 1px solid #8f8f8f; gap: 3px; }
    .status .model { width: 47px; border-left: 1px solid #8f8f8f; }
    .taskbar { flex: none; height: 39px; display: flex; align-items: center; background: #eee; color: #262626; border-top: 1px solid #fff; padding: 0 12px 2px 16px; font-size: 10px; }
    .search { width: 182px; height: 26px; margin-left: 12px; border-radius: 13px; background: #fff; display: flex; align-items: center; gap: 8px; padding-left: 9px; font-size: 11px; color: #666; border: 1px solid #e4e4e4; }
    .search input { flex: 1; }
    .search input::placeholder { color: #666; opacity: 1; }
    .apps { width: 587px; margin-left: 2px; display: flex; height: 100%; align-items: center; }
    .app { flex: 1; height: 34px; position: relative; border-radius: 3px; }
    .app.on { background: #fafafa; }
    .app.run::after, .app.on::after { content: ""; position: absolute; bottom: 1px; width: 5px; height: 2px; border-radius: 1px; background: #888; }
    .app.on::after { width: 13px; background: #1a6fb0; }
    .tray { margin-left: auto; display: flex; align-items: center; height: 100%; }
    .tray button { height: 30px; }
    .weather { width: 34px; margin-right: 8px; }
    .w26 { width: 27px; }
    .w20 { width: 20px; }
    .lang { width: 36px; text-align: center; line-height: 13px; margin-right: 4px; }
    .clock { width: 60px; text-align: right; line-height: 13px; margin-left: 7px; white-space: nowrap; }
    .w22 { width: 22px; }
  `;

  private slash(d: string, w = 8) {
    return html`<svg width=${w} height="14" viewBox="0 0 ${w} 14" aria-hidden="true"><path d=${d} fill="none" stroke="#222" /></svg>`;
  }

  private app(label: string, art: Art, cls = "") {
    return html`<button type="button" class="app ${cls}" aria-label=${label}><svg width="24" height="24" viewBox="0 0 24 24" aria-hidden="true">${art}</svg></button>`;
  }

  private by(label: string, kind: string, value = "BYLAYER") {
    return html`<div class="combo by"><i class=${kind}></i><select aria-label=${label}><option>${value}</option></select>${chevron}</div>`;
  }

  private titleBar() {
    return html`<header class="title">
      <svg width="15" height="16" viewBox="0 0 20 20" aria-hidden="true"><path d="M2 16C0 9 6 0 11 2c5 1 7 7 7 14z" fill="#20355c"/><path d="M5 13c2-6 7-8 8-5 0 3-3 4-7 4" fill="none" stroke="#e8eef6" stroke-width="2"/><circle cx="14.500" cy="14" r="5" fill="#d9c82e"/><path d="M12.500 12v4M15 12h2v4h-2z" stroke="#333" fill="none"/></svg>
      <h1>progeCAD 2018 Professional - [TAVOLE TECNOLOGIA_01.dwg]</h1>
      <button class="win" type="button" aria-label="Riduci"><svg width="10" height="10"><path d="M1 5.500h8" stroke="#222"/></svg></button>
      <button class="win" type="button" aria-label="Ingrandisci"><svg width="10" height="10"><path d="M1.500 1.500h7v7h-7z" fill="none" stroke="#222"/></svg></button>
      <button class="win" type="button" aria-label="Chiudi"><svg width="10" height="10"><path d="M1 1l8 8M9 1L1 9" stroke="#222"/></svg></button>
    </header>`;
  }

  private menuBar() {
    return html`<div class="menu">
      <svg width="16" height="16" viewBox="0 0 16 16" aria-hidden="true"><path d="M3 2l3-1h8v13H5l-3-2z" fill="#e8eaf0"/><circle cx="9" cy="5.500" r="3" fill="#4a5374"/><path d="M4 10h8M4 12h6" stroke="#aab"/></svg>
      <nav>${MENUS.map((m) => html`<button type="button">${m}</button>`)}</nav>
      <button class="mdi" type="button" aria-label="Riduci disegno"><svg width="8" height="8"><path d="M1 6h5" stroke="#fff" stroke-width="1.500"/></svg></button>
      <button class="mdi" type="button" aria-label="Ripristina disegno"><svg width="8" height="8"><path d="M2.500 1.500h4v4h-4zM1 3.500h4v3H1z" fill="#666" stroke="#eee"/></svg></button>
      <button class="mdi" type="button" aria-label="Chiudi disegno"><svg width="8" height="8"><path d="M1.500 1.500l5 5M6.500 1.500l-5 5" stroke="#fff" stroke-width="1.700"/></svg></button>
    </div>`;
  }

  private toolbars() {
    return html`
      <div class="bar top" role="toolbar">
        <i class="grip"></i>${tools("new open save | print preview | cut copy paste brush | undo redo | hand zclock zwin zprev | sync props | help")}
        <i class="grip gap"></i>${tools("style |")}
        <div class="combo std"><select aria-label="Stile testo"><option>Standard</option></select>${chevron}</div>
        ${tools("| dimstyle |")}
        <div class="combo std"><select aria-label="Stile quota"><option>Standard</option></select>${chevron}</div>
        <i class="grip gap"></i>${tools("dist area volume | info point")}
        <i class="grip gap"></i>${tools("xref | chain | dots ab rail | z0 broom | block wave curve cross")}
        <i class="grip gap"></i>${tools("table1 table2 windows")}
      </div>
      <div class="bar low" role="toolbar">
        <i class="grip"></i>${tools("layers")}
        <div class="combo layer">${pic("bulb")}${pic("sun")}${pic("frame")}${pic("unlock")}<i class="swatch"></i><select aria-label="Layer"><option>LINEE IN VISTA</option></select>${chevron}</div>
        ${tools("layPrev layBack layState")}
        <i class="grip gap"></i>${tools("wheel")}
        ${this.by("Colore", "swatch")}<i class="sep"></i>${this.by("Tipo di linea", "rule")}<i class="sep"></i>${this.by("Spessore", "rule")}<i class="sep"></i>
        <div class="combo off"><select aria-label="Stile di stampa" disabled><option>BYCOLOR</option></select>${chevron}</div>
        <i class="grip gap"></i>${tools("dimFlash dimFlash2 | dimLin dimAl dimArc dimOrd dimJog | rad1 rad2 rad3 angle cen cross | base base2 | tol check plusminus |")}
      </div>`;
  }

  private center() {
    return html`<main class="center">
      <div class="files">
        <div class="file"><span>TAVOLE TECNOLOGIA_01.dwg</span><button type="button" aria-label="Chiudi scheda"><svg width="8" height="8"><path d="M1 1l6 6M7 1L1 7" stroke="#fff" stroke-width="1.300"/></svg></button></div>
        <div class="arrows">
          <button type="button" aria-label="Precedente"><svg width="8" height="8"><path d="M6 1v6L2 4z" fill="#777" stroke="#aaa" stroke-width=".8"/></svg></button>
          <button type="button" aria-label="Successiva"><svg width="8" height="8"><path d="M2 1v6l4-3z" fill="#777" stroke="#aaa" stroke-width=".8"/></svg></button>
        </div>
      </div>
      <div class="doc">
        <cad-drawing></cad-drawing>
        <div class="sheets">
          ${["M3 2v7M8.500 2L4.500 5.500l4 3.500z", "M8 2L4 5.500 8 9z", "M5 2l4 3.500L5 9z", "M9 2v7M3.500 2l4 3.500-4 3.500z"].map(
            (d, i) => html`<button class="go" type="button" aria-label="Scorri ${i + 1}"><svg width="12" height="11"><path d=${d} fill="#111" stroke="#111"/></svg></button>`)}
          <span class="first">${this.slash("M0.500 0L6 13.500")}</span>
          <button class="on" type="button">Model</button>${this.slash("M8 0L2 13.500M5 7l3 6.500", 10)}
          <button type="button">Layout1</button>${this.slash("M4 0l6 13.500M9 0L6 13.500", 13)}
          <button type="button">Layout2</button>${this.slash("M8 0L3 13.500", 10)}
        </div>
      </div>
    </main>`;
  }

  private status() {
    const cells = (s: string) => s.split(" ").map((n) => html`<button class="cell" type="button" aria-label=${n}>${pic(n)}</button>`);
    return html`<footer class="status">
      <span class="msg">Pronto</span><i class="thin"></i><span class="pos">13922.5414,-5003.0561,0.0000</span>
      <button class="scale" type="button">${pic("sAnno", 14)}<span>1:1</span></button>
      ${cells("sAnno2 sAnno3 sDots sGrid sOrtho sPolar sSnap sTrack sLwt")}
      <button class="model" type="button">MODELLO</button>
      ${cells("sGear sOk sPm sUcs sShapes")}<button class="cell" type="button" aria-label="Messaggi">${pic("sMail", 12)}</button>
    </footer>`;
  }

  private taskbar() {
    return html`<div class="taskbar">
      <button type="button" aria-label="Start"><svg width="21" height="21" viewBox="0 0 21 21"><defs><linearGradient id="w" x2="1" y2="1"><stop stop-color="#52c7f2"/><stop offset="1" stop-color="#0f86d6"/></linearGradient></defs><path d="M1 1h9v9H1zM11 1h9v9h-9zM1 11h9v9H1zM11 11h9v9h-9z" fill="url(#w)"/></svg></button>
      <label class="search"><svg width="13" height="13" viewBox="0 0 13 13" aria-hidden="true"><circle cx="5.500" cy="5.500" r="4.300" fill="none" stroke="#222" stroke-width="1.400"/><path d="M8.800 8.800l3.500 3.500" stroke="#222" stroke-width="1.600"/></svg><input type="text" placeholder="Cerca" aria-label="Cerca" /></label>
      <div class="apps">
        ${this.app("Visualizzazione attività", svg`<defs><linearGradient id="t" x2="0" y2="1"><stop stop-color="#666"/><stop offset="1" stop-color="#111"/></linearGradient></defs><path d="M2 7h15v14H2z" fill="url(#t)"/><path d="M7 3h14v13H7z" fill="#f4f4f4" opacity=".7"/><path d="M7 7h10v9H7z" fill="#bdbdbd"/>`)}
        ${this.app("Esplora file", svg`<path d="M2 3h8l2 3h10v4H2z" fill="#d59c1c"/><path d="M2 7h20v14H2z" fill="#f7cd4b"/><path d="M5 21v-3.500c0-1 1-1.500 1.500-1.500h11c.5 0 1.500.5 1.500 1.500V21z" fill="#2487c7"/><path d="M8 18.500h8" stroke="#125d92"/>`, "run")}
        ${this.app("progeCAD", svg`<path d="M3 20C0 12 7 1 13 3c6 1 8 8 8 16z" fill="#1d2f54"/><path d="M7 14c2-7 8-8 9-5 0 3-4 4-8 4" fill="none" stroke="#e9eef6" stroke-width="2"/><circle cx="16" cy="16" r="6" fill="#e6d22f"/><text x="11.500" y="19" font-family="Liberation Sans" font-weight="700" font-size="8" fill="#222">18</text>`, "on")}
        ${this.app("Note", svg`<defs><linearGradient id="n" x2="0" y2="1"><stop stop-color="#27dcf0"/><stop offset="1" stop-color="#2a62dc"/></linearGradient></defs><rect x="2" y="2" width="20" height="20" rx="4" fill="url(#n)"/><path d="M9 18.500l.500-4 5-9.500 3 1.500-5 9.500z" fill="#fff"/>`)}
        ${this.app("Writer", svg`<path d="M3 2h18v4c-2 3-1 8 1 14v2H3z" fill="#3f6380"/><path d="M3 2h16v5H3z" fill="#20394c"/><path d="M4 8c3-1 4-4 7-4 2-1 5-1 8-2-2 3-5 3-7 4-3 0-5 2-8 3z" fill="#fff"/><path d="M10 12h9M10 15h9M10 18h7" stroke="#c7ddef" stroke-width="1.300"/>`)}
        ${this.app("Calc", svg`<path d="M3 2h18v4c-2 3-1 8 1 14v2H3z" fill="#95c11f"/><path d="M3 2h12L10 22H3z" fill="#37491d"/><path d="M4 8c3-1 4-4 7-4 2-1 5-1 8-2-2 3-5 3-7 4-3 0-5 2-8 3z" fill="#fff"/><path d="M10 12h9v7h-9zM10 15.500h9M14.500 12v7" fill="none" stroke="#eef7cc" stroke-width="1.300"/>`)}
        ${this.app("Stelle", svg`<rect x="2" y="2" width="20" height="20" rx="3" fill="#55d8cf"/><path d="M12 4l2.500 4.500 5.500.5-3.500 4 1.500 6-6-2.500L6 19l1.500-6L4 9l5.500-.5z" fill="#e6f8f6"/><path d="M7 15l8-5M8 17l8-5" stroke="#d8417d" stroke-width="1.500"/><path d="M7 12l6-4" stroke="#e6b43a" stroke-width="1.500"/>`)}
        ${this.app("OpenOffice", svg`<circle cx="12" cy="12" r="9.700" fill="#2385b8"/><path d="M3 10c3-1 4 2 7 0 2-2 6-3 10-2-4 1-5 2-7 4-3 2-7 1-10-2zM7 15c2 0 3 1 5-.5 3-1.500 6-1 8-1.500-3 1-5 2-7 3.500-2 .5-4 .5-6-1.500z" fill="#fff"/>`)}
        ${this.app("Blocco note", svg`<path d="M5 3h14v17H5z" fill="#56c5dc"/><path d="M4 20h15v2H4z" fill="#8b5a2a"/><path d="M7 1v3M10 1v3M13 1v3M16 1v3" stroke="#274c55" stroke-width="1.300"/><path d="M7 8h10M7 11.500h10M7 15h8" stroke="#155e73" stroke-width="1.300"/>`)}
        ${this.app("AV", svg`<rect x="2" y="2" width="20" height="20" rx="3" fill="#1f69e0"/><path d="M4.500 16L9 7.500l6 9L19.500 9M8 14.500h4M12.500 8L15 12" fill="none" stroke="#fff" stroke-width="1.900"/>`)}
        ${this.app("Blender", svg`<path d="M3 17L12 10H5V8h8l-2.500-2 2-1.500L20 10v3H10l-5 4.500z" fill="#e07b22"/><ellipse cx="14.500" cy="13.500" rx="6.500" ry="5.500" fill="#e07b22"/><ellipse cx="14.500" cy="13.500" rx="4.200" ry="3.600" fill="#fff"/><circle cx="14.500" cy="13.500" r="2.200" fill="#24548f"/>`)}
        ${this.app("TikTok", svg`<circle cx="12" cy="12" r="10" fill="#050505"/><path d="M13 6v8.500a2.500 2.500 0 1 1-2.500-2.500M13 6c.5 2.500 2 3.500 4 3.500" fill="none" stroke="#5ce" stroke-width="2.400"/><path d="M13.500 6.500V15a2.500 2.500 0 1 1-2.500-2.500M13.500 6.500c.5 2.500 2 3.500 4 3.500" fill="none" stroke="#fff" stroke-width="1.800"/>`)}
        ${this.app("Chrome", svg`<circle cx="11" cy="13" r="10" fill="#fbc116"/><path d="M11 13L2.300 8A10 10 0 0 1 20 8.500z" fill="#e33b2e"/><path d="M11 13L2.300 8a10 10 0 0 0 8 15l5-8z" fill="#2da94f"/><circle cx="11" cy="13" r="5" fill="#fff"/><circle cx="11" cy="13" r="3.900" fill="#2a7de1"/><circle cx="18" cy="6" r="6" fill="#d52f84"/><text x="15.800" y="9" font-family="Liberation Sans" font-size="8" fill="#fff">L</text>`, "run")}
        ${this.app("Diavoletto", svg`<rect x="2" y="2" width="20" height="20" rx="3" fill="#d8301c"/><path d="M8 2h8v9H8z" fill="#f4451f"/><path d="M4.500 11.500l7 3c-2 1.500-6 1-7-3zM19.500 11.500l-7 3c2 1.500 6 1 7-3z" fill="#fff"/>`)}
        ${this.app("L", svg`<path d="M2 2h20v20H2z" fill="#c8151f"/><path d="M9.500 6.500V17H16" fill="none" stroke="#fff" stroke-width="3"/>`)}
        ${this.app("OBS", svg`<circle cx="11" cy="13" r="9" fill="#2b2b2d"/><circle cx="11" cy="13" r="8" fill="none" stroke="#555"/><path d="M11 13c-4-1-4-5-1-7M11 13c3-3 6-1 6.500 2M11 13c1 4-2 6-6 5" fill="none" stroke="#ddd" stroke-width="1.400"/><circle cx="18.500" cy="5.500" r="5" fill="#e30b13"/>`, "run")}
      </div>
      <div class="tray">
        <button class="weather" type="button" aria-label="Meteo 12°"><svg width="32" height="28" viewBox="0 0 32 28"><circle cx="18" cy="12" r="5" fill="#f3a04a"/><path d="M6 24a5 5 0 0 1 0-9 6.500 6.500 0 0 1 11-1 5 5 0 0 1 5 10z" fill="#a5c3f0"/><path d="M7 17a6 6 0 0 1 9-1c-3 0-5 3-9 1z" fill="#dce8fb"/><rect x="11" y="1" width="19" height="12" rx="6" fill="#fafafa"/><text x="14" y="10" font-family="Open Sans" font-size="9" fill="#222">12°</text></svg></button>
        <button class="w26" type="button" aria-label="Mostra icone"><svg width="12" height="12"><path d="M2 8l4-4 4 4" fill="none" stroke="#222" stroke-width="1.300"/></svg></button>
        <button class="w26" type="button" aria-label="Cloud"><svg width="16" height="16"><path d="M4 11a3.500 3.500 0 0 1 0-6 4.500 4.500 0 0 1 8-1 4 4 0 0 1 2 7z" fill="#999" stroke="#444"/><circle cx="11" cy="10.500" r="4.500" fill="#1a7bd0"/><path d="M11 8v1M11 10v3" stroke="#fff" stroke-width="1.400"/></svg></button>
        <button class="w26" type="button" aria-label="Aggiornamenti"><svg width="16" height="16"><path d="M2 7a6 6 0 0 1 11-2M13.500 1.500V5H10M13 11a6 6 0 0 1-10 1M2 14.500V11h3.500" fill="none" stroke="#333" stroke-width="1.300"/><circle cx="11.500" cy="11.500" r="3.500" fill="#e8941f"/></svg></button>
        <button class="w26" type="button" aria-label="Microfono"><svg width="14" height="16"><rect x="4.500" y="1.500" width="5" height="8" rx="2.500" fill="#7ba8de" stroke="#31609c"/><path d="M2 7.500c0 6 10 6 10 0M7 12v3" fill="none" stroke="#31609c" stroke-width="1.200"/></svg></button>
        <button class="lang" type="button">ITA<br />IT</button>
        <button class="w20" type="button" aria-label="Wi-Fi"><svg width="16" height="14"><path d="M1.500 5.500c4-4 9-4 13 0M3.500 8c3-3 6-3 9 0M5.500 10.300c2-2 3-2 5 0" fill="none" stroke="#222" stroke-width="1.200"/><circle cx="8" cy="12" r="1.200" fill="#222"/></svg></button>
        <button class="w20" type="button" aria-label="Volume"><svg width="16" height="14"><path d="M1.500 5H4l3-3v10L4 9H1.500z" fill="none" stroke="#222"/><path d="M9 5c1 1.500 1 2.500 0 4M11 3.500c2 2.500 2 4.500 0 7M13 2c2.500 3 2.500 7 0 10" fill="none" stroke="#333"/></svg></button>
        <button class="w22" type="button" aria-label="Batteria"><svg width="19" height="14"><rect x="1" y="3.500" width="14" height="8" rx="2" fill="#3a9a46" stroke="#222"/><path d="M16.500 6v3" stroke="#222" stroke-width="1.500"/><path d="M9 0L5 7h3l-1 5 5-7H9z" fill="#1b4d24" stroke="#eee" stroke-width=".5"/></svg></button>
        <button class="clock" type="button">12:57<br />16/02/2026</button>
        <button class="w20" type="button" aria-label="Notifiche"><svg width="14" height="14"><path d="M2 10.500h10M3 10.500V6a4 4 0 0 1 3-4M11 10.500V8M5.500 12.500h3" fill="none" stroke="#222" stroke-width="1.200"/><path d="M6 4h3L6 7.500h3M10 1h3l-3 3.500h3" fill="none" stroke="#222" stroke-width=".9"/></svg></button>
      </div>
    </div>`;
  }

  render() {
    return html`
      <section class="window">
        ${this.titleBar()}${this.menuBar()}${this.toolbars()}
        <div class="body">
          <aside class="rail draw"><div class="stack">${tools("line xline pline polygon rect arc circle cloud spline ellipse earc insblk mkblk dot hatch region group grid text")}</div></aside>
          ${this.center()}
          <aside class="rail edit"><div class="stack">${tools("erase cpobj mirror offset array move rotate scale stretch trim extend brk pad1 pad2 pad3 chamfer fillet explode")}</div></aside>
          <aside class="rail lay"><div class="stack">${tools("layPrev layBack stFlake | stCheck stBrush stQ | st1 st2 stPlus stIce | stBulbOff | stLock stLockB | stBulb stBulb2 | stStar stBlue | stLkB stLk | stMoon stBee")}</div></aside>
          <aside class="rail order"><div class="stack">${tools("ord1 ord2 ord3 ord4 | ord5 ord6")}</div></aside>
        </div>
        <div class="command">
          <button type="button" aria-label="Chiudi comando"><svg width="8" height="8"><path d="M1 1l6 6M7 1L1 7" stroke="#ddd"/></svg></button>
          <label>Comando:<input type="text" aria-label="Comando" /></label>
        </div>
        ${this.status()}
      </section>
      ${this.taskbar()}`;
  }
}
